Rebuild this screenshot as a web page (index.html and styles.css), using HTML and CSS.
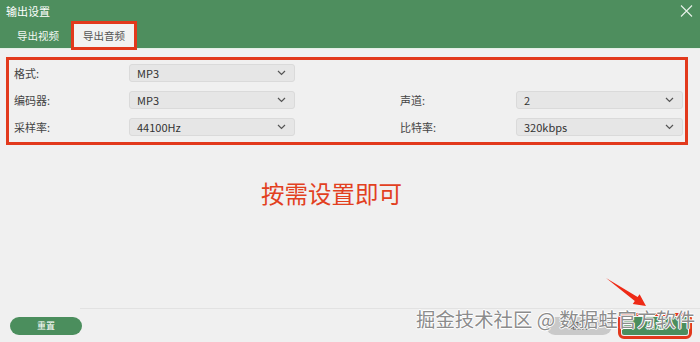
FILE: index.html
```html
<!DOCTYPE html>
<html lang="zh-CN">
<head>
<meta charset="UTF-8">
<meta name="viewport" content="width=device-width, initial-scale=1.0">
<title>输出设置</title>
<link rel="stylesheet" href="styles.css">
</head>
<body>

<div class="window">
  <header class="titlebar">
    <span class="title">输出设置</span>
    <svg class="close" width="13" height="12" viewBox="0 0 13 12">
      <path d="M1 0.5 L12 11.5 M12 0.5 L1 11.5" stroke="#e8f2ea" stroke-width="1.1" fill="none"/>
    </svg>
  </header>

  <nav class="tabs">
    <span class="tab">导出视频</span>
    <span class="tab active">导出音频</span>
  </nav>

  <section class="settings">
    <span class="label">格式:</span>
    <div class="select"><span>MP3</span><svg class="chev" width="9" height="6" viewBox="0 0 9 6"><path d="M1 1 L4.5 4.5 L8 1" stroke="#555" stroke-width="1.2" fill="none"/></svg></div>

    <span class="label">编码器:</span>
    <div class="select"><span>MP3</span><svg class="chev" width="9" height="6" viewBox="0 0 9 6"><path d="M1 1 L4.5 4.5 L8 1" stroke="#555" stroke-width="1.2" fill="none"/></svg></div>
    <span class="label right">声道:</span>
    <div class="select"><span>2</span><svg class="chev" width="9" height="6" viewBox="0 0 9 6"><path d="M1 1 L4.5 4.5 L8 1" stroke="#555" stroke-width="1.2" fill="none"/></svg></div>

    <span class="label">采样率:</span>
    <div class="select"><span>44100Hz</span><svg class="chev" width="9" height="6" viewBox="0 0 9 6"><path d="M1 1 L4.5 4.5 L8 1" stroke="#555" stroke-width="1.2" fill="none"/></svg></div>
    <span class="label right">比特率:</span>
    <div class="select"><span>320kbps</span><svg class="chev" width="9" height="6" viewBox="0 0 9 6"><path d="M1 1 L4.5 4.5 L8 1" stroke="#555" stroke-width="1.2" fill="none"/></svg></div>
  </section>

  <p class="hint">按需设置即可</p>

  <footer class="footer">
    <div class="divider"></div>
    <div class="actions">
      <button class="btn reset">重置</button>
      <button class="btn cancel">取消</button>
      <button class="btn ok">确定</button>
    </div>
  </footer>

  <svg class="arrow" width="50" height="38" viewBox="0 0 50 38">
    <polygon points="6,6 37.6,25.1 39.6,22.2 46,34 32.8,32 34.8,29.1" fill="#ee2a16"/>
  </svg>

  <div class="watermark">掘金技术社区 @ 数据蛙官方软件</div>
</div>

</body>
</html>
```

FILE: styles.css
```css
body {
  margin: 0;
  background: #f0f0f0;
  font-family: "Noto Sans CJK SC", "Liberation Sans", sans-serif;
  color: #333;
}
.window {
  position: relative;
  width: 700px;
  height: 342px;
  overflow: hidden;
}
.titlebar {
  height: 22px;
  background: #4e8e5e;
  display: flex;
  align-items: center;
  justify-content: space-between;
  padding: 0 7px 0 6px;
  color: #fff;
  font-size: 11px;
}
.tabs {
  height: 26px;
  background: #4e8e5e;
  display: flex;
  align-items: flex-start;
  padding-left: 5px;
  border-bottom: 1px solid #e4eee6;
}
.tab {
  margin-top: -1px;
  height: 23px;
  line-height: 23px;
  padding: 0 9px;
  border: 3px solid transparent;
  font-size: 10.5px;
  color: #f2f7f3;
}
.tab.active {
  background: #f2f2f2;
  color: #555;
  border-color: #e2391c;
}
.settings {
  margin: 8px 12px 0 6px;
  border: 3px solid #e2391c;
  padding: 4px 3px 6px 5px;
  display: grid;
  grid-template-columns: 115px 166px 105px 116px 167px;
  grid-auto-rows: 18px;
  row-gap: 9px;
  align-items: center;
}
.label {
  grid-column: 1;
  font-size: 11px;
  color: #444;
}
.label.right {
  grid-column: 4;
}
.select {
  height: 18px;
  box-sizing: border-box;
  background: #e6e6e6;
  border: 1px solid #dadada;
  border-radius: 3px;
  display: flex;
  align-items: center;
  justify-content: space-between;
  padding: 0 8px 0 7px;
  font-size: 11px;
  color: #333;
}
.hint {
  margin: 33px 0 0 261px;
  font-size: 23.5px;
  line-height: 30px;
  color: #e2401f;
}
.divider {
  margin: 100px 0 0 80px;
  height: 1px;
  background: #e2e2e2;
}
.actions {
  display: flex;
  align-items: center;
  margin-top: 8px;
  padding: 0 12px 0 10px;
  gap: 10px;
}
.btn {
  height: 18px;
  width: 66px;
  border: none;
  border-radius: 9px;
  font-family: inherit;
  font-size: 9px;
  line-height: 18px;
  color: #fff;
  padding: 0;
}
.reset {
  width: 72px;
  background: #4b8e5d;
  margin-right: auto;
}
.cancel {
  background: #c9c9c9;
  color: #555;
}
.ok {
  background: #4b8e5d;
  border-radius: 2px;
  outline: 3px solid #e2391c;
  outline-offset: 1px;
}
.arrow {
  position: absolute;
  left: 600px;
  top: 272px;
}
.watermark {
  position: absolute;
  left: 416px;
  top: 305px;
  font-size: 19.4px;
  line-height: 28px;
  color: #8c8c8c;
  text-shadow: 1px 0 0 #fff, -1px 0 0 #fff, 0 1px 0 #fff, 0 -1px 0 #fff;
  white-space: nowrap;
}
```
